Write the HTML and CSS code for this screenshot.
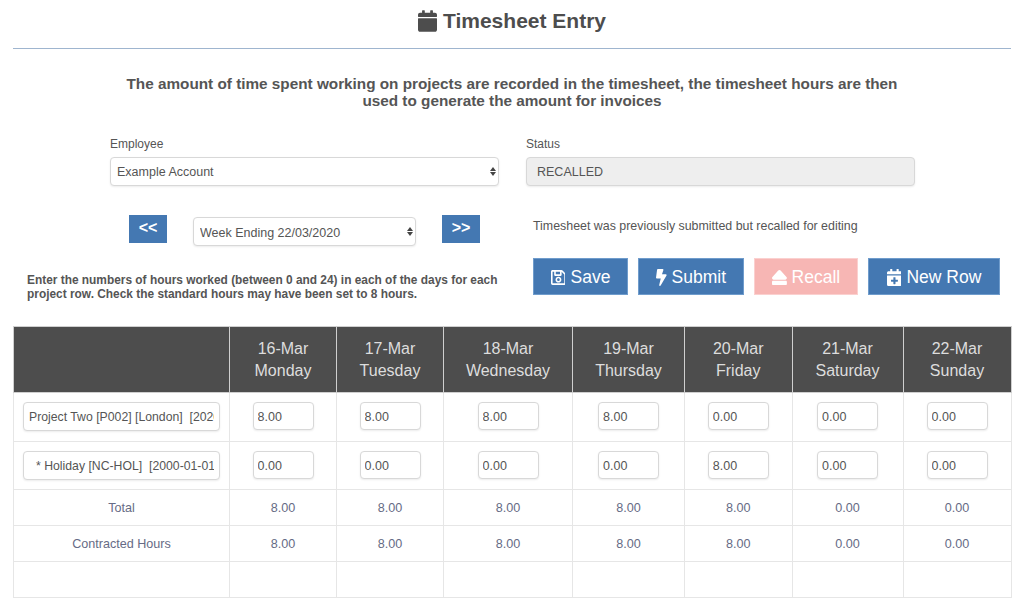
FILE: index.html
```html
<!DOCTYPE html>
<html>
  <head>
    <title>Timesheet Entry</title>
    <link rel="stylesheet" href="styles.css">
  </head>
  <body>
    <div class="page-title">
      <svg class="title-icon" viewBox="0 0 448 512"><path d="M12 192h424c6.600 0 12 5.400 12 12v260c0 26.500-21.500 48-48 48H48c-26.500 0-48-21.500-48-48V204c0-6.600 5.400-12 12-12zm436-44v-36c0-26.500-21.500-48-48-48h-48V12c0-6.600-5.400-12-12-12h-40c-6.600 0-12 5.400-12 12v52H160V12c0-6.600-5.400-12-12-12h-40c-6.600 0-12 5.400-12 12v52H48C21.500 64 0 85.500 0 112v36c0 6.600 5.400 12 12 12h424c6.600 0 12-5.400 12-12z"/></svg>
      <h1>Timesheet Entry</h1>
    </div>

    <p class="intro">The amount of time spent working on projects are recorded in the timesheet, the timesheet hours are then used to generate the amount for invoices</p>

    <div class="form-row">
      <div class="field">
        <label>Employee</label>
        <div class="select-wrap">
          <select class="form-control"><option>Example Account</option></select>
        </div>
      </div>
      <div class="field">
        <label>Status</label>
        <input class="form-control status-input" type="text" value="RECALLED" disabled />
      </div>
    </div>

    <div class="tools">
      <div class="tools-left">
        <div class="week-nav">
          <button class="week-btn">&lt;&lt;</button>
          <div class="select-wrap week-select">
            <select class="form-control"><option>Week Ending 22/03/2020</option></select>
          </div>
          <button class="week-btn">&gt;&gt;</button>
        </div>
        <p class="help-text">Enter the numbers of hours worked (between 0 and 24) in each of the days for each project row. Check the standard hours may have been set to 8 hours.</p>
      </div>
      <div class="tools-right">
        <p class="status-text">Timesheet was previously submitted but recalled for editing</p>
        <div class="actions">
          <button class="action-btn btn-save">
            <svg viewBox="0 0 448 512"><path d="M433.941 129.941l-83.882-83.882A48 48 0 0 0 316.118 32H48C21.490 32 0 53.490 0 80v352c0 26.510 21.490 48 48 48h352c26.510 0 48-21.490 48-48V163.882a48 48 0 0 0-14.059-33.941zM272 80v80H144V80h128zm122 352H54a6 6 0 0 1-6-6V86a6 6 0 0 1 6-6h42v104c0 13.255 10.745 24 24 24h176c13.255 0 24-10.745 24-24V83.882l78.243 78.243a6 6 0 0 1 1.757 4.243V426a6 6 0 0 1-6 6zM224 232c-48.523 0-88 39.477-88 88s39.477 88 88 88 88-39.477 88-88-39.477-88-88-88zm0 128c-22.056 0-40-17.944-40-40s17.944-40 40-40 40 17.944 40 40-17.944 40-40 40z"/></svg>
            Save
          </button>
          <button class="action-btn btn-submit">
            <svg viewBox="0 0 320 512"><path d="M296 160H180.600l42.600-129.800C227.200 15 215.700 0 200 0H56C44 0 33.800 8.900 32.200 20.800l-32 240C-1.700 275.200 9.500 288 24 288h118.700L96.600 482.500c-3.600 15.200 8 29.500 23.300 29.500 8.400 0 16.400-4.400 20.800-12l176-304c9.300-15.900-2.200-36-20.700-36z"/></svg>
            Submit
          </button>
          <button class="action-btn btn-recall">
            <svg viewBox="0 0 448 512"><path d="M448 384v64c0 17.673-14.327 32-32 32H32c-17.673 0-32-14.327-32-32v-64c0-17.673 14.327-32 32-32h384c17.673 0 32 14.327 32 32zM48.053 320h351.886c41.651 0 63.581-49.674 35.383-80.435L259.383 47.558c-19.014-20.743-51.751-20.744-70.767 0L12.670 239.565C-15.475 270.268 6.324 320 48.053 320z"/></svg>
            Recall
          </button>
          <button class="action-btn btn-new">
            <svg viewBox="0 0 448 512"><path d="M436 160H12c-6.600 0-12-5.400-12-12v-36c0-26.500 21.500-48 48-48h48V12c0-6.600 5.400-12 12-12h40c6.600 0 12 5.400 12 12v52h128V12c0-6.600 5.400-12 12-12h40c6.600 0 12 5.400 12 12v52h48c26.500 0 48 21.500 48 48v36c0 6.600-5.400 12-12 12zM12 192h424c6.600 0 12 5.400 12 12v260c0 26.500-21.500 48-48 48H48c-26.500 0-48-21.500-48-48V204c0-6.600 5.400-12 12-12zm316 140c0-6.600-5.400-12-12-12h-60v-60c0-6.600-5.400-12-12-12h-40c-6.600 0-12 5.400-12 12v60h-60c-6.600 0-12 5.400-12 12v40c0 6.600 5.400 12 12 12h60v60c0 6.600 5.400 12 12 12h40c6.600 0 12-5.400 12-12v-60h60c6.600 0 12-5.400 12-12v-40z"/></svg>
            New Row
          </button>
        </div>
      </div>
    </div>

    <table class="timesheet">
      <colgroup>
        <col class="col-project">
        <col class="col-mon">
        <col class="col-tue">
        <col class="col-wed">
        <col class="col-thu">
        <col class="col-fri">
        <col class="col-sat">
        <col class="col-sun">
      </colgroup>
      <thead>
        <tr>
          <th></th>
          <th>16-Mar<br>Monday</th>
          <th>17-Mar<br>Tuesday</th>
          <th>18-Mar<br>Wednesday</th>
          <th>19-Mar<br>Thursday</th>
          <th>20-Mar<br>Friday</th>
          <th>21-Mar<br>Saturday</th>
          <th>22-Mar<br>Sunday</th>
        </tr>
      </thead>
      <tbody>
        <tr class="entry-row">
          <td><input class="form-control project-input" type="text" value="Project Two [P002] [London]  [2020-01-01]" /></td>
          <td><input class="form-control hours-input" type="text" value="8.00" /></td>
          <td><input class="form-control hours-input" type="text" value="8.00" /></td>
          <td><input class="form-control hours-input" type="text" value="8.00" /></td>
          <td><input class="form-control hours-input" type="text" value="8.00" /></td>
          <td><input class="form-control hours-input" type="text" value="0.00" /></td>
          <td><input class="form-control hours-input" type="text" value="0.00" /></td>
          <td><input class="form-control hours-input" type="text" value="0.00" /></td>
        </tr>
        <tr class="entry-row">
          <td><input class="form-control project-input holiday" type="text" value="* Holiday [NC-HOL]  [2000-01-01]" /></td>
          <td><input class="form-control hours-input" type="text" value="0.00" /></td>
          <td><input class="form-control hours-input" type="text" value="0.00" /></td>
          <td><input class="form-control hours-input" type="text" value="0.00" /></td>
          <td><input class="form-control hours-input" type="text" value="0.00" /></td>
          <td><input class="form-control hours-input" type="text" value="8.00" /></td>
          <td><input class="form-control hours-input" type="text" value="0.00" /></td>
          <td><input class="form-control hours-input" type="text" value="0.00" /></td>
        </tr>
        <tr class="total-row">
          <td>Total</td>
          <td>8.00</td>
          <td>8.00</td>
          <td>8.00</td>
          <td>8.00</td>
          <td>8.00</td>
          <td>0.00</td>
          <td>0.00</td>
        </tr>
        <tr class="total-row">
          <td>Contracted Hours</td>
          <td>8.00</td>
          <td>8.00</td>
          <td>8.00</td>
          <td>8.00</td>
          <td>8.00</td>
          <td>0.00</td>
          <td>0.00</td>
        </tr>
        <tr class="total-row">
          <td></td>
          <td></td>
          <td></td>
          <td></td>
          <td></td>
          <td></td>
          <td></td>
          <td></td>
        </tr>
      </tbody>
    </table>
  </body>
</html>
```

FILE: styles.css
```css
body {
  margin: 0;
  padding: 0 13px 0 13px;
  background: #fff;
  color: #555;
  font-family: "Liberation Sans", Arial, sans-serif;
  overflow: hidden;
}
.page-title {
  display: flex;
  justify-content: center;
  align-items: center;
  gap: 6px;
  height: 49px;
  padding-bottom: 7px;
  box-sizing: border-box;
  border-bottom: 1px solid #9fb5cf;
}
.page-title h1 {
  margin: 0;
  font-size: 21px;
  font-weight: bold;
  color: #4d4d4d;
}
.title-icon {
  width: 19px;
  height: 22px;
  fill: #4d4d4d;
}
.intro {
  width: 790px;
  margin: 26px auto 0;
  text-align: center;
  font-size: 15.3px;
  line-height: 17px;
  font-weight: bold;
  color: #555;
}
.form-row {
  display: flex;
  gap: 27px;
  margin: 28px 0 0 97px;
}
.field {
  width: 389px;
}
.field label {
  display: block;
  font-size: 12px;
  line-height: 15px;
  margin-bottom: 5px;
}
.form-control {
  display: block;
  width: 100%;
  height: 29px;
  box-sizing: border-box;
  border: 1px solid #d8d8d8;
  border-radius: 4px;
  background: #fff;
  color: #555;
  font-family: "Liberation Sans", Arial, sans-serif;
  font-size: 12.5px;
  padding: 0 6px;
  box-shadow: 0 1px 2px rgba(0, 0, 0, 0.08);
  outline: none;
}
select.form-control {
  appearance: none;
  -webkit-appearance: none;
}
.status-input {
  background: #eee;
  padding: 0 10px;
}
.select-wrap {
  position: relative;
}
/* up and down arrows of the select */
.select-wrap::before,
.select-wrap::after {
  content: "";
  position: absolute;
  right: 3px;
  border-left: 3px solid transparent;
  border-right: 3px solid transparent;
  pointer-events: none;
}
.select-wrap::before {
  top: 10px;
  border-bottom: 4px solid #444;
}
.select-wrap::after {
  top: 15px;
  border-top: 4px solid #444;
}
.tools {
  display: flex;
  margin-top: 29px;
}
.tools-left {
  width: 507px;
  padding-left: 14px;
  box-sizing: border-box;
}
.week-nav {
  display: flex;
  align-items: flex-start;
  margin-left: 102px;
}
.week-btn {
  width: 38px;
  height: 28px;
  border: 0;
  background: #4478b2;
  color: #fff;
  font-family: "Liberation Sans", Arial, sans-serif;
  font-size: 16px;
  line-height: 22px;
  font-weight: bold;
  padding: 0 0 3px;
}
.week-select {
  width: 223px;
  margin: 2px 26px 0 26px;
}
.week-select select {
  padding-top: 2px;
}
.help-text {
  margin: 28px 0 0;
  font-size: 11.9px;
  line-height: 13.5px;
  font-weight: bold;
  color: #555;
}
.tools-right {
  flex: 1;
  padding-left: 13px;
}
.status-text {
  margin: 4px 0 0;
  font-size: 12.4px;
  line-height: 15px;
  color: #555;
}
.actions {
  display: flex;
  gap: 10px;
  margin-top: 24px;
}
.action-btn {
  display: flex;
  justify-content: center;
  align-items: center;
  gap: 5px;
  height: 37px;
  padding: 1px 0 0;
  border: 1px solid #6f9ccc;
  background: #4478b2;
  color: #fff;
  font-family: "Liberation Sans", Arial, sans-serif;
  font-size: 17.5px;
}
.action-btn svg {
  height: 17px;
  fill: #fff;
}
.btn-save { width: 95px; }
.btn-submit { width: 106px; }
.btn-recall {
  width: 104px;
  background: #f7b6b4;
  border-color: #fbd0cf;
}
.btn-new { width: 132px; }
.timesheet {
  width: 998px;
  margin-top: 25px;
  border-collapse: collapse;
  table-layout: fixed;
}
.col-project { width: 216px; }
.col-mon { width: 107px; }
.col-tue { width: 107px; }
.col-wed { width: 129px; }
.col-thu { width: 112px; }
.col-fri { width: 107.5px; }
.col-sat { width: 111px; }
.col-sun { width: 108px; }
.timesheet th {
  height: 65px;
  padding: 0;
  background: #4d4d4d;
  border: 1px solid #cfcfcf;
  color: #ddd;
  font-size: 16px;
  line-height: 22px;
  font-weight: normal;
}
.timesheet td {
  padding: 0;
  border: 1px solid #e6e6e6;
  text-align: center;
  vertical-align: middle;
}
.entry-row td {
  height: 48.5px;
  padding-top: 9px;
  box-sizing: border-box;
  vertical-align: top;
}
.project-input {
  width: 197px;
  margin: 0 auto;
  padding: 1px 5px 0;
  font-size: 12.25px;
}
.holiday {
  padding-left: 12px;
}
.hours-input {
  width: 61px;
  height: 28px;
  margin: 0 auto;
  padding: 2px 4px 0;
}
.total-row td {
  height: 35px;
  font-size: 12.6px;
  color: #666b85;
}
```
